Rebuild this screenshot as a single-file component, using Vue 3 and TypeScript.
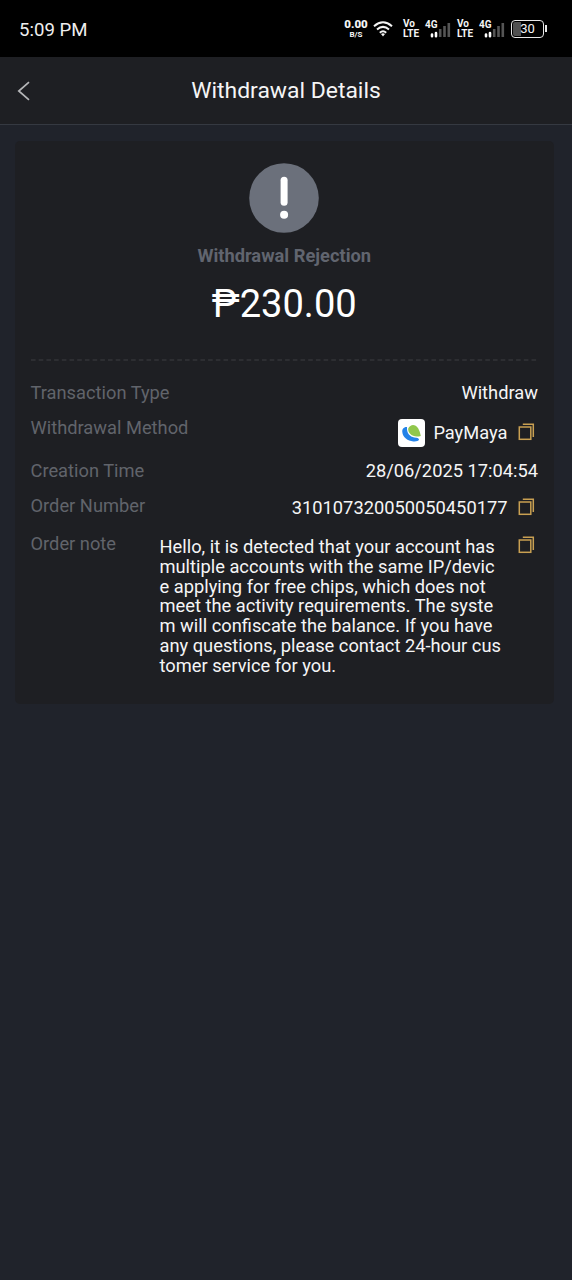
<script setup lang="ts">
interface DetailRow {
  id: string
  label: string
  value: string
  copy?: boolean
  logo?: boolean
}

const rows: DetailRow[] = [
  { id: 'type', label: 'Transaction Type', value: 'Withdraw' },
  { id: 'method', label: 'Withdrawal Method', value: 'PayMaya', copy: true, logo: true },
  { id: 'time', label: 'Creation Time', value: '28/06/2025 17:04:54' },
  { id: 'number', label: 'Order Number', value: '310107320050050450177', copy: true },
  {
    id: 'note',
    label: 'Order note',
    value: [
      'Hello, it is detected that your account has',
      'multiple accounts with the same IP/devic',
      'e applying for free chips, which does not',
      'meet the activity requirements. The syste',
      'm will confiscate the balance. If you have',
      'any questions, please contact 24-hour cus',
      'tomer service for you.',
    ].join('\n'),
    copy: true,
  },
]
const sims = [1, 2]
</script>

<template>
  <div class="screen">
    <div class="status">
      <span class="clock">5:09 PM</span>
      <div class="indicators">
        <div class="stack speed"><b>0.00</b><small>B/S</small></div>
        <svg class="wifi" width="20" height="16" viewBox="0 0 20 16" fill="none" stroke="#f4f4f4" stroke-width="2">
          <path d="M1 5.2Q10-2.6 19 5.2M4 8.6Q10 3.2 16 8.6M6.8 11.7Q10 8.8 13.2 11.7" />
          <path d="M8 13.1Q10 11.6 12 13.1L10 15.4Z" fill="#f4f4f4" stroke="none" />
        </svg>
        <template v-for="s in sims" :key="s">
          <div class="stack volte"><span>Vo</span><span>LTE</span></div>
          <div class="cell">
            <span class="gen">4G</span>
            <svg width="26" height="18" viewBox="0 0 26 18">
              <path d="M7 14.6v1.6M11 13v3.2" stroke="#fff" stroke-width="2.6" stroke-linecap="round" />
              <path d="M15.2 9v8M19.5 6v11M23.8 3v14" stroke="#555" stroke-width="2.6" />
            </svg>
          </div>
        </template>
        <div class="battery"><div class="cellbody"><span>30</span></div><i /></div>
      </div>
    </div>

    <header class="header">
      <svg class="back" width="14" height="20" viewBox="0 0 14 20" fill="none" stroke="#b5b6b8" stroke-width="1.7">
        <path d="M12 1.2L1.8 10L12 18.8" />
      </svg>
      <h1>Withdrawal Details</h1>
    </header>

    <main class="card">
      <svg class="alert" width="70" height="70" viewBox="0 0 70 70">
        <circle cx="35" cy="35" r="34.8" fill="#6b707b" />
        <rect x="31.6" y="13.8" width="7" height="29" rx="3.5" fill="#fff" />
        <circle cx="35.1" cy="51.7" r="4" fill="#fff" />
      </svg>
      <div class="state">Withdrawal Rejection</div>
      <div class="amount">₱230.00</div>
      <svg class="divider" width="508" height="2" viewBox="0 0 508 2">
        <path d="M0 1H508" stroke="#3c3e42" stroke-width="1.2" stroke-dasharray="4.6 3.1" />
      </svg>
      <div v-for="row in rows" :key="row.id" class="row" :class="row.id">
        <span class="label">{{ row.label }}</span>
        <div class="content">
          <svg v-if="row.logo" class="logo" width="27" height="28" viewBox="0 0 27 28">
            <rect width="27" height="28" rx="4" fill="#fff" />
            <path d="M9 8C5.5 7.8 4 10.2 4.3 13C4.8 18.4 9.7 21.9 15.3 22.4C18 22.7 20.4 22 21 20.8C21 18.9 18.6 18.5 16.1 18.4C12.8 18.2 10.1 15.3 9.4 12.6C9 11 9 9.2 9 8Z" fill="#2382e8" />
            <path d="M10.2 9.5C11.7 6.5 14.6 5.1 17.2 6.5C20.5 8.2 21.8 12.4 22.8 16.9C18.8 18.1 14.7 17.6 12.1 14.8C10.6 13.2 10 11.2 10.2 9.5Z" fill="#91c74c" />
          </svg>
          <span class="value">{{ row.value }}</span>
          <svg v-if="row.copy" class="copy" width="17" height="18" viewBox="0 0 17 18" fill="none" stroke="#c9a052" stroke-width="1.5">
            <rect x="1.3" y="4" width="11.5" height="12.3" />
            <path d="M4.8 1.3H15.3V14" />
          </svg>
        </div>
      </div>
    </main>
  </div>
</template>

<style>
body {
  margin: 0;
  background: #20232b;
}
</style>

<style scoped>
.screen {
  width: 572px;
  height: 1280px;
  overflow: hidden;
  background: #20232b;
  color: #f5f5f6;
  font-family: Roboto, "Noto Sans", sans-serif;
}
.status {
  height: 57px;
  box-sizing: border-box;
  padding: 0 25px 0 19px;
  background: #000;
  display: flex;
  align-items: center;
  justify-content: space-between;
}
.clock {
  font-size: 18.6px;
  line-height: 22px;
  margin-top: 2px;
  color: #eee;
}
.indicators {
  display: flex;
  align-items: center;
  height: 22px;
}
.stack {
  display: flex;
  flex-direction: column;
  align-items: center;
  font-weight: 700;
}
.speed {
  width: 24px;
  margin-right: 5px;
}
.speed b {
  font-size: 11.5px;
  line-height: 11px;
}
.speed small {
  font-size: 8px;
  line-height: 9px;
}
.volte {
  width: 17px;
  align-items: flex-start;
  font-size: 10px;
  line-height: 9.5px;
}
.wifi {
  margin-right: 10px;
}
.cell {
  display: grid;
  width: 26px;
  height: 18px;
  margin: 0 6px 0 5px;
}
.cell > * {
  grid-area: 1 / 1;
}
.gen {
  font-size: 10px;
  line-height: 10px;
  font-weight: 700;
}
.battery {
  display: flex;
  align-items: center;
}
.cellbody {
  box-sizing: border-box;
  width: 33px;
  height: 18px;
  border: 1.5px solid #e8e8e8;
  border-radius: 4px;
  background: linear-gradient(90deg, #505050 0 30%, #000 30%);
  background-clip: content-box;
  padding: 1px;
  text-align: center;
  font-size: 13px;
  line-height: 14px;
}
.battery i {
  width: 2px;
  height: 7px;
  margin-left: 1px;
  background: #e8e8e8;
}
.header {
  height: 68px;
  box-sizing: border-box;
  border-bottom: 1px solid #353941;
  background: #1e1f23;
  display: grid;
  grid-template-columns: 50px 1fr 50px;
  align-items: center;
}
.back {
  margin-left: 17px;
  margin-top: 1px;
}
h1 {
  margin: 0;
  text-align: center;
  font-size: 22.9px;
  line-height: 28px;
  font-weight: 400;
}
.card {
  box-sizing: border-box;
  width: 539px;
  height: 563px;
  margin: 16px 0 0 15px;
  padding: 22px 16px 0 15.5px;
  border-radius: 5px;
  background: #1e1f23;
  display: flex;
  flex-direction: column;
}
.alert {
  align-self: center;
  flex: none;
}
.state {
  margin-top: 12px;
  text-align: center;
  font-size: 18.3px;
  line-height: 22px;
  font-weight: 700;
  color: #61656f;
}
.amount {
  margin-top: 14px;
  height: 46px;
  text-align: center;
  font-size: 38.1px;
  line-height: 46px;
  color: #fff;
}
.divider {
  margin-top: 32px;
  flex: none;
}
.row {
  display: flex;
  justify-content: space-between;
  align-items: flex-start;
  font-size: 18.3px;
  line-height: 20px;
  flex: none;
}
.label {
  color: #61646b;
}
.content {
  display: flex;
  align-items: center;
}
.type {
  margin-top: 22px;
  height: 35px;
}
.method {
  height: 43px;
}
.method .content {
  height: 29px;
}
.time {
  height: 35px;
}
.number {
  height: 38px;
}
.number .content {
  height: 23px;
}
.logo {
  margin-right: 8px;
  margin-top: 1px;
}
.copy {
  flex: none;
  margin: 0 3px 2px 10.5px;
}
.note .content {
  align-items: flex-start;
}
.note .value {
  width: 348px;
  margin-top: 3px;
  line-height: 19.83px;
  white-space: pre;
}
.note .copy {
  margin-top: 2px;
}
</style>
